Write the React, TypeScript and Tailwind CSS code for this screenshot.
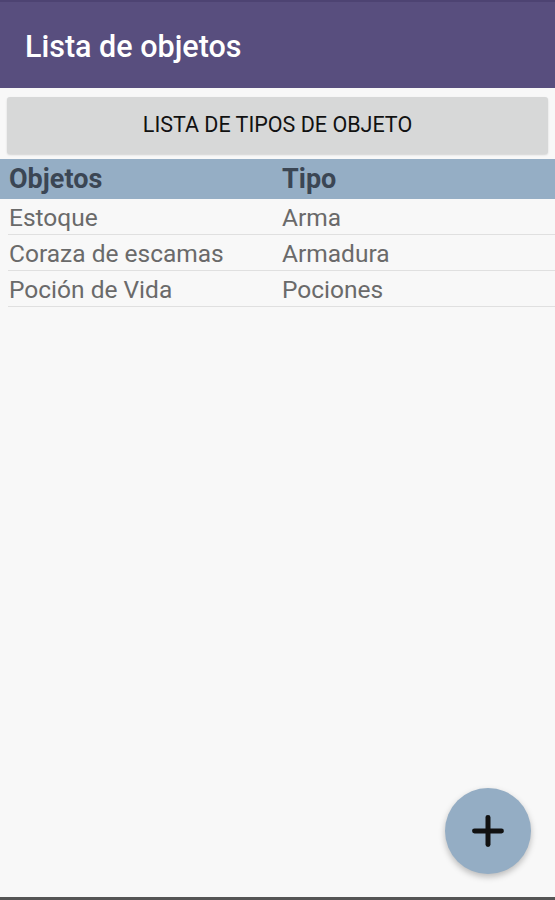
import { Plus } from "lucide-react";

const items = [
  { name: "Estoque", type: "Arma" },
  { name: "Coraza de escamas", type: "Armadura" },
  { name: "Poción de Vida", type: "Pociones" },
];

function App() {
  return (
    <div className="relative flex h-[900px] w-[555px] flex-col overflow-hidden bg-[#f8f8f8] font-['Roboto',sans-serif]">
      <div className="h-[2px] bg-[#4d4372]" />
      <header className="flex h-[86px] items-center bg-[#584e7e] px-[25px] pt-[4px]">
        <h1 className="text-[30.5px] font-medium text-white">Lista de objetos</h1>
      </header>

      <div className="px-[7px] pt-[9px]">
        <button className="flex h-[57px] w-full items-center justify-center rounded-[3px] bg-[#d7d8d8] text-[21.5px] text-[#111] shadow-[0_1px_2px_rgba(0,0,0,0.15)]">
          LISTA DE TIPOS DE OBJETO
        </button>
      </div>

      <div className="mt-[5px] flex h-[40px] items-center bg-[#95aec5] px-[9px] text-[27px] font-bold text-[#3b4654]">
        <span className="w-[273px]">Objetos</span>
        <span>Tipo</span>
      </div>

      <div className="pl-[8px]">
        {items.map((it) => (
          <div
            key={it.name}
            className="flex h-[36px] items-center border-b border-[#e0e0e0] pl-px pt-[3px] text-[24.5px] text-[#6a6a6a]"
          >
            <span className="w-[273px]">{it.name}</span>
            <span>{it.type}</span>
          </div>
        ))}
      </div>

      <button className="absolute left-[445px] top-[788px] flex h-[86px] w-[86px] items-center justify-center rounded-full bg-[#94adc4] shadow-[0_3px_6px_rgba(0,0,0,0.25)]">
        <Plus size={46} strokeWidth={2.6} color="#111" />
      </button>

      <div className="absolute bottom-0 left-0 h-[3px] w-full bg-[#555]" />
    </div>
  );
}

export default App;
